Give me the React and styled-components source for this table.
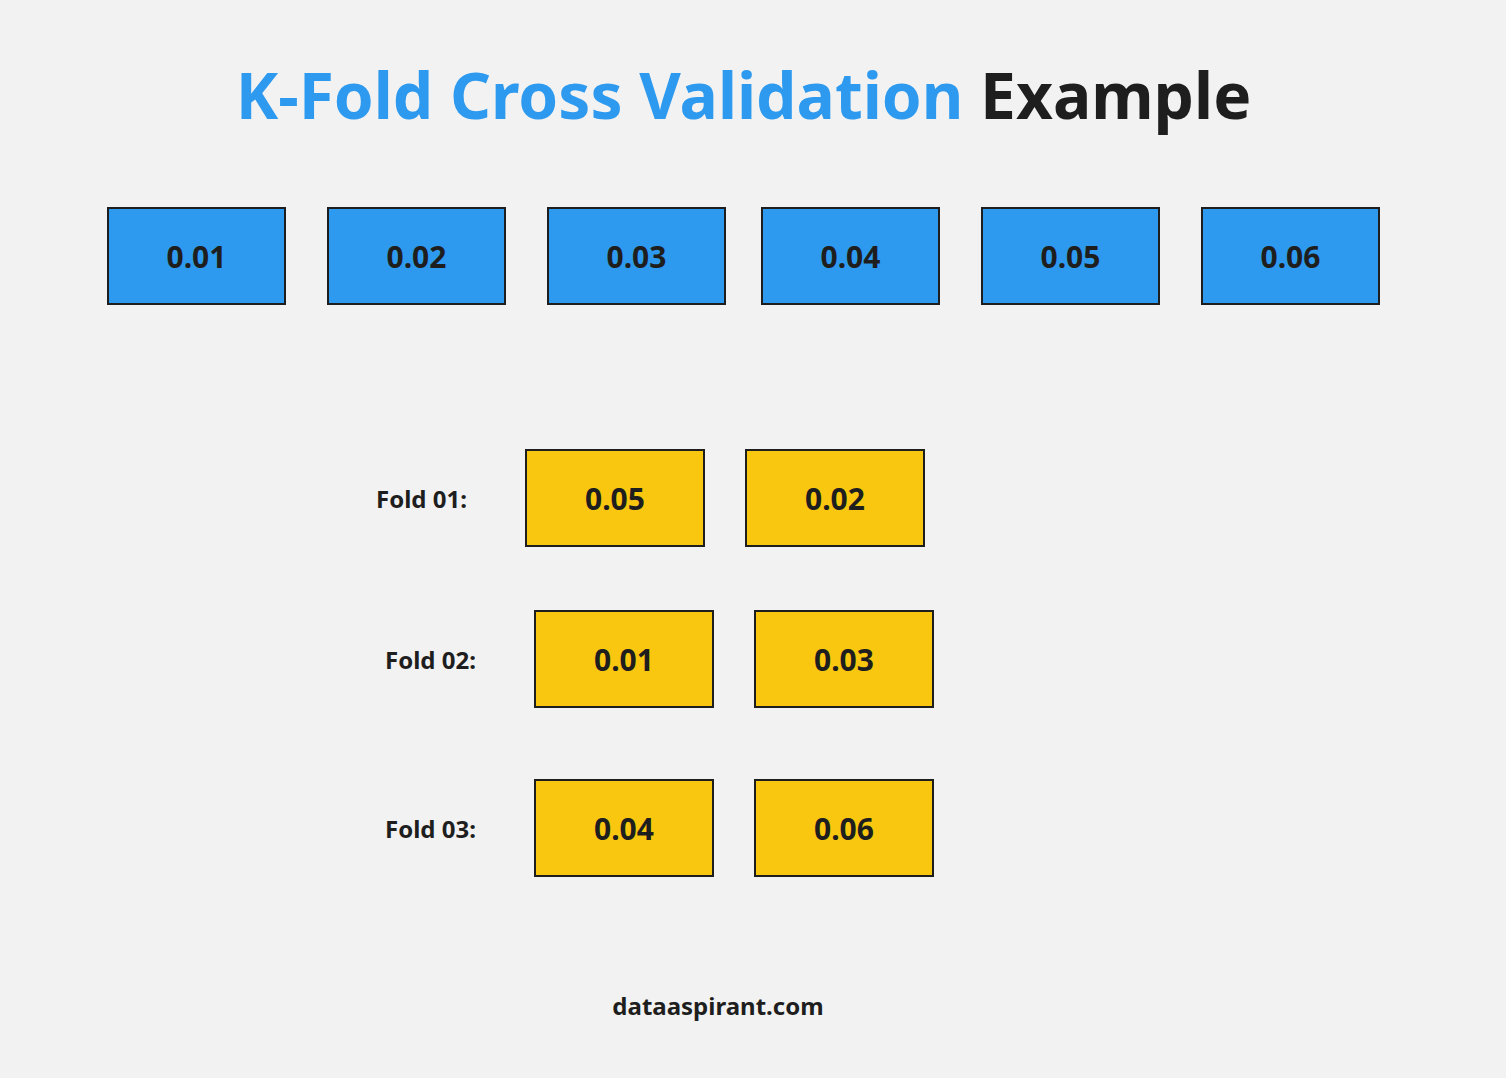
import React from "react";
import styled, { createGlobalStyle } from "styled-components";

const Global = createGlobalStyle`
  html, body { margin: 0; padding: 0; background: #f2f2f2; }
  body { font-family: "Noto Sans", "Open Sans", sans-serif; color: #1e1e1e; }
`;

const Page = styled.div`
  width: 1506px;
  height: 1078px;
  background: #f2f2f2;
  display: flex;
  flex-direction: column;
  overflow: hidden;
`;

const Title = styled.h1`
  margin: 63px 0 0;
  padding-right: 19px;
  text-align: center;
  font-size: 64px;
  line-height: 64px;
  font-weight: 700;
  color: #1e1e1e;
  letter-spacing: 0;
`;

const Accent = styled.span`
  color: #2e9aef;
`;

const TopRow = styled.div`
  display: flex;
  margin-top: 80px;
  padding-left: 107px;
`;

const Cell = styled.div`
  box-sizing: border-box;
  flex: none;
  width: ${(p) => p.$w || 180}px;
  height: 98px;
  margin-left: ${(p) => p.$ml || 0}px;
  border: 2.8px solid #1e1e1e;
  background: ${(p) => (p.$tone === "yellow" ? "#f9c70f" : "#2e9aef")};
  display: flex;
  align-items: center;
  justify-content: center;
  padding-top: 1px;
  font-size: 30px;
  font-weight: 700;
  color: #1e1e1e;
`;

const Folds = styled.div`
  display: flex;
  flex-direction: column;
  margin-top: 144px;
`;

const FoldRow = styled.div`
  display: flex;
  align-items: center;
  margin-top: ${(p) => p.$mt || 0}px;
  padding-left: ${(p) => p.$pl}px;
`;

const FoldLabel = styled.div`
  width: 149px;
  font-size: 24px;
  font-weight: 700;
  color: #1e1e1e;
`;

const FoldCells = styled.div`
  display: flex;
  gap: 40px;
`;

const Footer = styled.div`
  margin-top: ${(p) => p.$mt}px;
  padding-right: 70px;
  text-align: center;
  font-size: 24px;
  line-height: 30px;
  font-weight: 700;
  color: #1e1e1e;
`;

const top = [
  ["0.01", 0],
  ["0.02", 41],
  ["0.03", 41],
  ["0.04", 35],
  ["0.05", 41],
  ["0.06", 41],
];

const folds = [
  { label: "Fold 01:", values: ["0.05", "0.02"], pl: 376, mt: 0 },
  { label: "Fold 02:", values: ["0.01", "0.03"], pl: 385, mt: 63 },
  { label: "Fold 03:", values: ["0.04", "0.06"], pl: 385, mt: 71 },
];

export default function App() {
  return (
    <Page>
      <Global />
      <Title>
        <Accent>K-Fold Cross Validation</Accent> Example
      </Title>
      <TopRow>
        {top.map(([v, ml]) => (
          <Cell key={v} $w={179} $ml={ml}>
            {v}
          </Cell>
        ))}
      </TopRow>
      <Folds>
        {folds.map((f) => (
          <FoldRow key={f.label} $pl={f.pl} $mt={f.mt}>
            <FoldLabel>{f.label}</FoldLabel>
            <FoldCells>
              {f.values.map((v) => (
                <Cell key={v} $tone="yellow">
                  {v}
                </Cell>
              ))}
            </FoldCells>
          </FoldRow>
        ))}
      </Folds>
      <Footer $mt={114}>dataaspirant.com</Footer>
    </Page>
  );
}
